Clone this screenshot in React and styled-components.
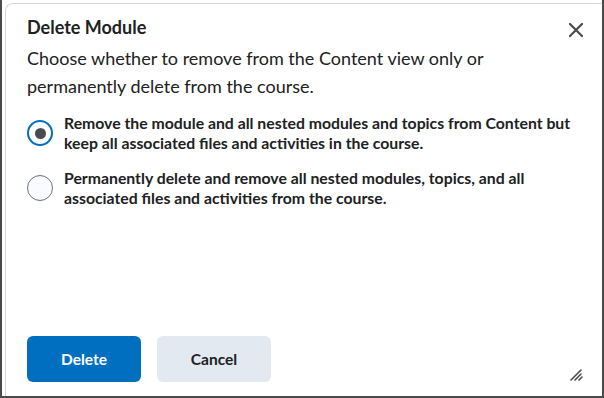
import React, { useState } from 'react';
import styled, { createGlobalStyle } from 'styled-components';

const GlobalStyle = createGlobalStyle`
  html, body {
    margin: 0;
    padding: 0;
    background: #ffffff;
  }
  * { box-sizing: border-box; }
`;

const Frame = styled.div`
  width: 604px;
  height: 398px;
  border-left: 2px solid #4a4a4a;
  border-right: 2px solid #4a4a4a;
  border-bottom: 2px solid #4a4a4a;
  padding: 3px 0 0 3px;
  background: #ffffff;
  font-family: Lato, "Noto Sans", sans-serif;
  color: #202122;
`;

const Dialog = styled.div`
  position: relative;
  height: 100%;
  border: 1px solid #d3d9e3;
  border-right: none;
  border-bottom: none;
  border-radius: 8px 0 0 0;
  padding: 10px 0 0 21px;
  display: flex;
  flex-direction: column;
`;

const Header = styled.div`
  display: flex;
  align-items: center;
  justify-content: space-between;
  padding-right: 16px;
`;

const Title = styled.h2`
  margin: 0;
  font-size: 18px;
  font-weight: 700;
  line-height: 24px;
`;

const CloseButton = styled.button`
  border: none;
  background: none;
  padding: 0;
  width: 20px;
  height: 20px;
  display: flex;
  align-items: center;
  justify-content: center;
  margin-top: 6px;
  cursor: pointer;
`;

const Description = styled.p`
  margin: 4px 0 0 0;
  font-size: 18px;
  line-height: 28px;
  padding-right: 40px;
`;

const Options = styled.div`
  margin-top: 13px;
  display: flex;
  flex-direction: column;
  gap: 15px;
`;

const OptionRow = styled.label`
  display: flex;
  align-items: center;
  gap: 11px;
  cursor: pointer;
`;

const Radio = styled.span`
  flex: none;
  width: 26px;
  height: 26px;
  border-radius: 50%;
  border: ${p => (p.$checked ? '2.5px solid #006fbf' : '1px solid #6e7477')};
  background: ${p => (p.$checked ? '#ffffff' : '#f9fbff')};
  display: flex;
  align-items: center;
  justify-content: center;
  &::after {
    content: '';
    width: 11px;
    height: 11px;
    border-radius: 50%;
    background: #494c4e;
    display: ${p => (p.$checked ? 'block' : 'none')};
  }
`;

const OptionText = styled.span`
  font-size: 15.8px;
  font-weight: 700;
  line-height: 20px;
  padding-right: 24px;
`;

const Footer = styled.div`
  margin-top: auto;
  margin-bottom: 14px;
  display: flex;
  gap: 16px;
`;

const Button = styled.button`
  width: 114px;
  height: 46px;
  border: none;
  border-radius: 6px;
  font-family: Lato, "Noto Sans", sans-serif;
  font-size: 15.5px;
  font-weight: 700;
  cursor: pointer;
  background: ${p => (p.$primary ? '#006fbf' : '#e3e9f1')};
  color: ${p => (p.$primary ? '#ffffff' : '#202122')};
`;

const Grip = styled.svg`
  position: absolute;
  right: 19px;
  bottom: 15px;
`;

export default function App() {
  const [choice, setChoice] = useState(0);
  const options = [
    'Remove the module and all nested modules and topics from Content but keep all associated files and activities in the course.',
    'Permanently delete and remove all nested modules, topics, and all associated files and activities from the course.',
  ];
  return (
    <>
      <GlobalStyle />
      <Frame>
        <Dialog>
          <Header>
            <Title>Delete Module</Title>
            <CloseButton aria-label="Close">
              <svg width="14" height="14" viewBox="0 0 14 14">
                <path d="M1 1 L13 13 M13 1 L1 13" stroke="#494c4e" strokeWidth="2.2" strokeLinecap="round" />
              </svg>
            </CloseButton>
          </Header>
          <Description>
            Choose whether to remove from the Content view only or permanently delete from the course.
          </Description>
          <Options>
            {options.map((t, i) => (
              <OptionRow key={i} onClick={() => setChoice(i)}>
                <Radio $checked={choice === i} />
                <OptionText>{t}</OptionText>
              </OptionRow>
            ))}
          </Options>
          <Footer>
            <Button $primary>Delete</Button>
            <Button>Cancel</Button>
          </Footer>
          <Grip width="14" height="14" viewBox="0 0 14 14">
            <path d="M2 13 L12 3 M6 13 L12 7 M10 13 L13 10" stroke="#494c4e" strokeWidth="1.6" strokeLinecap="round" />
          </Grip>
        </Dialog>
      </Frame>
    </>
  );
}
